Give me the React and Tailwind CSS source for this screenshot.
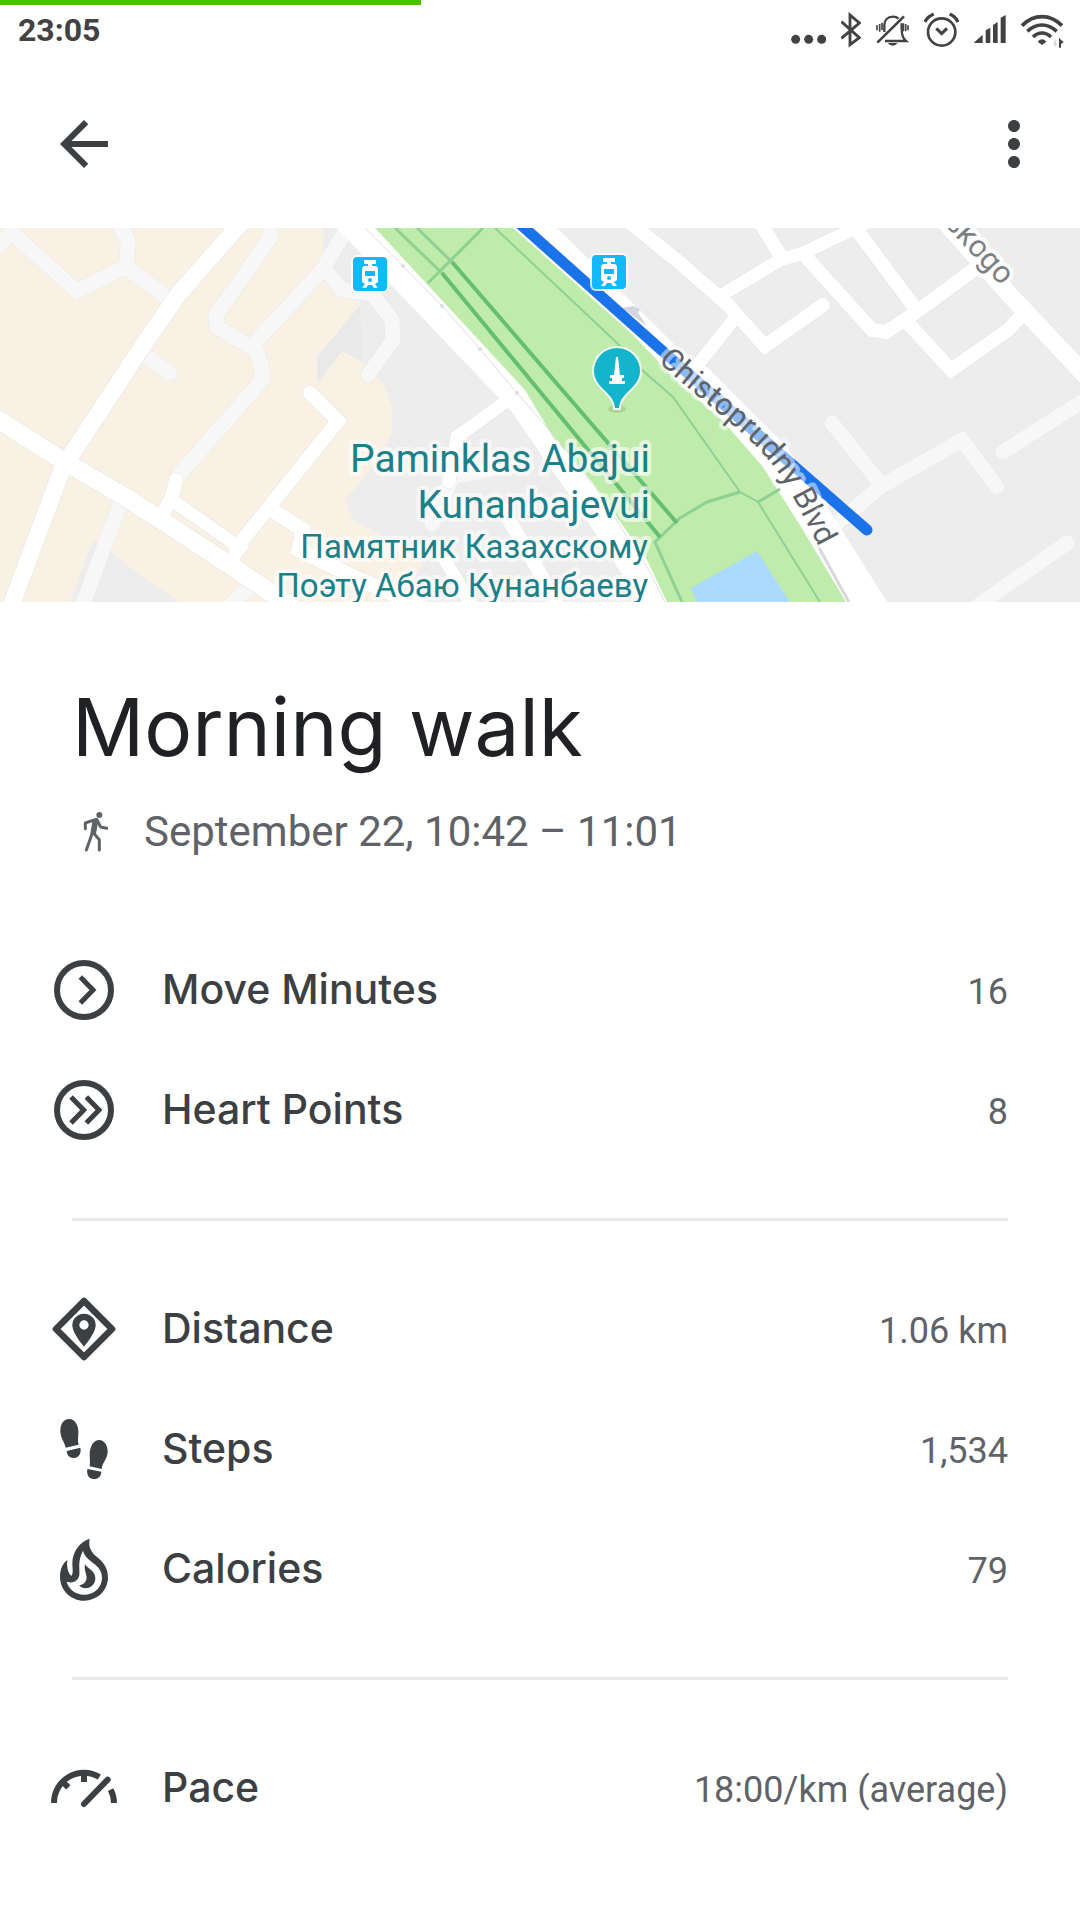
import React from "react";
import { MdArrowBack, MdMoreVert } from "react-icons/md";

const statusIcons = [
  {
    name: "More notifications",
    size: "w-[35px]",
    box: "96 36 105 108",
    art: (
      <g fill="currentColor">
        <circle cx="110" cy="118" r="13.5" />
        <circle cx="149" cy="118" r="13.5" />
        <circle cx="188" cy="118" r="13.5" />
      </g>
    ),
  },
  {
    name: "Bluetooth",
    size: "w-5",
    box: "239 36 60 108",
    art: (
      <path
        d="M240 65 294 113 266 134V45L294 69 240 115"
        fill="none"
        stroke="currentColor"
        strokeWidth="8.500"
      />
    ),
  },
  {
    name: "Notifications silenced",
    size: "w-[33px]",
    box: "345 36 99 108",
    art: (
      <g fill="none" stroke="currentColor" strokeWidth="7">
        <path d="M370 96V76C370 60 380 50 396 50c7 0 12 2 17 6" />
        <path d="M422 70v16c0 18 2 28 13 37h-63" />
        <path d="M349 128 429 49" strokeWidth="8" />
        <path d="M380 129h30q-6 8-15 8t-15-8z" fill="currentColor" stroke="none" />
        <path d="M348 76v15M356 72v23M363 68v22" strokeWidth="5" />
        <path d="M427 70v24M434 72v22M441 76v15" strokeWidth="5" />
      </g>
    ),
  },
  {
    name: "Alarm set",
    size: "w-[35px]",
    box: "490 36 105 108",
    art: (
      <g fill="none" stroke="currentColor" strokeWidth="8">
        <circle cx="543" cy="96" r="41" />
        <path d="M527 85 543 101 559 85" strokeWidth="9" />
        <path d="M492 66Q501 50 519 42M567 42Q585 50 592 66" strokeWidth="10" />
      </g>
    ),
  },
  {
    name: "Signal strength",
    size: "w-8",
    box: "640 36 96 108",
    art: (
      <path
        fill="currentColor"
        d="M641 127 666 104V129H641ZM675 91 689 83V129H675ZM697 75 711 66V129H697ZM720 53 735 45V129H720Z"
      />
    ),
  },
  {
    name: "Wi-Fi",
    size: "w-[43px]",
    box: "783 36 129 108",
    art: (
      <g fill="none" stroke="currentColor" strokeWidth="11">
        <path d="M786 77Q813 50 846 50T906 77" />
        <path d="M802 94Q822 75 846 75T890 94" />
        <path d="M819 111Q831 99 846 99T873 111" />
        <path d="M833 125Q846 111 859 125L846 135Z" fill="currentColor" stroke="none" />
        <path d="M889 114V143L880 130Z" fill="#d8d8d8" stroke="none" />
        <path d="M897 114V143H903V132L911 127Z" fill="currentColor" stroke="none" />
      </g>
    ),
  },
];

const icons = {
  move: (
    <svg viewBox="54 72 216 216" className="size-[72px] shrink-0" fill="none" stroke="currentColor" aria-hidden="true">
      <circle cx="162" cy="180" r="81" strokeWidth="18" />
      <path d="M151 141 189 180 151 219" strokeWidth="15" />
    </svg>
  ),
  heart: (
    <svg viewBox="54 432 216 216" className="size-[72px] shrink-0" fill="none" stroke="currentColor" aria-hidden="true">
      <circle cx="162" cy="540" r="81" strokeWidth="18" />
      <path d="M123 501 161 540 123 579M169 501 207 540 169 579" strokeWidth="15" />
    </svg>
  ),
  distance: (
    <svg viewBox="54 39 216 216" className="size-[72px] shrink-0" fill="currentColor" aria-hidden="true">
      <path
        d="M162 63 246 147 162 231 78 147Z"
        fill="none"
        stroke="currentColor"
        strokeWidth="20"
        strokeLinejoin="round"
      />
      <path
        fillRule="evenodd"
        d="M162 101a35 35 0 0 0-35 35c0 24 35 64 35 64s35-40 35-64a35 35 0 0 0-35-35Zm0 20a14 14 0 1 1 0 28a14 14 0 1 1 0-28Z"
      />
    </svg>
  ),
  steps: (
    <svg viewBox="54 399 216 216" className="size-[72px] shrink-0" fill="currentColor" aria-hidden="true">
      <path d="M117 417C137 417 147 440 145 462 144 475 143 485 146 494L107 503C104 485 91 475 91 452 91 432 101 417 117 417Z" />
      <path d="M110 513 151 503C155 520 146 534 131 534 117 534 111 525 110 513Z" />
      <path d="M207 480C224 480 234 497 233 517 232 537 217 548 215 567L179 559C181 545 179 535 179 522 180 497 192 480 207 480Z" />
      <path d="M172 567 214 575C213 590 205 597 191 597 177 597 169 585 172 567Z" />
    </svg>
  ),
  calories: (
    <svg viewBox="54 759 216 216" className="size-[72px] shrink-0" fill="currentColor" aria-hidden="true">
      <path
        fillRule="evenodd"
        d="M179 776C150 785 127 815 127 850 127 868 131 878 124 888 115 880 109 862 112 840 98 850 90 868 90 890 90 930 122 962 162 962 202 962 234 932 234 892 234 866 222 848 202 832 184 818 174 800 179 776ZM159 812C162 825 172 836 188 848 206 860 216 874 216 893 216 922 192 944 162 944 138 944 116 928 110 905 125 911 145 905 148 885 150 865 142 845 159 812Z"
      />
      <path d="M165 853C172 866 196 872 196 895 196 915 180 925 167 925 158 925 151 921 148 916 165 912 172 900 169 887 167 875 162 868 165 853Z" />
    </svg>
  ),
  pace: (
    <svg viewBox="54 39 216 216" className="size-[72px] shrink-0" fill="none" stroke="currentColor" strokeWidth="18" aria-hidden="true">
      <path d="M72 192A90 90 0 0 1 208 114" />
      <path d="M252 192A90 90 0 0 0 242 152" />
      <path d="M162 102V129M97 127 115 145" />
      <path d="M162 195 233 122" strokeLinecap="round" />
    </svg>
  ),
};

const sections = [
  [
    { icon: "move", label: "Move Minutes", value: "16" },
    { icon: "heart", label: "Heart Points", value: "8" },
  ],
  [
    { icon: "distance", label: "Distance", value: "1.06 km" },
    { icon: "steps", label: "Steps", value: "1,534" },
    { icon: "calories", label: "Calories", value: "79" },
  ],
  [{ icon: "pace", label: "Pace", value: "18:00/km (average)" }],
];

const lanes = [
  "M-6 249 12 233 77 291 125 267 168 297",
  "M127 265 128 240 118 224",
  "M270 220V238L216 315 217 327 256 350 262 367V380L178 476",
  "M346 230 322 270 253 345",
  "M325 270 342 290 372 294 392 320 393 340 368 375",
  "M147 357 170 373",
  "M119 507 82 606",
  "M255 582 230 606",
  "M832 423 880 483",
  "M835 525 880 487 962 440 997 487",
  "M1003 452 1086 399",
  "M1067 543 979 605",
  "M448 478 500 468",
  "M450 482 432 524",
];

const streets = [
  { d: "M240 224 177 296 142 347 71 455 63 467 11 606", w: 17 },
  { d: "M-6 417 67 463 125 497 187 537 255 582 290 606", w: 18 },
  { d: "M176 480 173 494 163 514", w: 14 },
  { d: "M310 393 338 421 236 548", w: 14 },
  { d: "M176 503 240 548 230 562", w: 13 },
  { d: "M272 510 303 530 299 550 350 575 420 606", w: 15 },
  { d: "M505 402 457 437 449 482", w: 13 },
  { d: "M503 510 540 573 558 606", w: 14 },
  { d: "M445 560 472 606", w: 13 },
  { d: "M632 224 680 263 728 305 765 346 823 305", w: 14 },
  { d: "M735 318 700 362", w: 13 },
  { d: "M725 293 780 260 803 253 864 224", w: 13 },
  { d: "M761 224 782 258", w: 14 },
  { d: "M854 226 915 308", w: 14 },
  { d: "M807 258 872 330 886 332 915 313 976 268", w: 14 },
  { d: "M907 322 951 370 1008 330 1023 314", w: 14 },
  { d: "M947 224 1007 292 1086 376", w: 18 },
];

function WalkIcon() {
  return (
    <svg
      viewBox="18 33 138 138"
      className="size-[46px] shrink-0"
      fill="none"
      stroke="currentColor"
      strokeWidth="9"
      strokeLinecap="round"
      strokeLinejoin="round"
      aria-hidden="true"
    >
      <circle cx="100" cy="51" r="9" fill="currentColor" stroke="none" />
      <path d="M58 92V75L90 64" />
      <path d="M93 66 104 87 122 91" />
      <path d="M84 68 93 66 86 104 78 104Z" fill="currentColor" />
      <path d="M80 102 61 156M82 104 100 125V156" />
    </svg>
  );
}

function TramStop({ x, y }) {
  return (
    <g transform={`translate(${x} ${y})`}>
      <rect x="-2" y="-2" width="38" height="38" rx="6" fill="#fff" opacity="0.8" />
      <rect width="34" height="34" rx="4" fill="#12b9fd" />
      <g fill="#fff">
        <path d="M11 3H23V7H19V10H15V7H11Z" />
        <path
          fillRule="evenodd"
          d="M12 9H22Q25 9 25 13V25L22 27 25 31H21L19 28H15L13 31H9L12 27 9 25V13Q9 9 12 9ZM12 14V19H22V14ZM17 21A2 2 0 1 0 17 25 2 2 0 1 0 17 21Z"
        />
      </g>
    </g>
  );
}

function RouteMap() {
  return (
    <svg
      viewBox="0 228 1080 374"
      preserveAspectRatio="xMidYMid slice"
      className="block h-[374px] w-full font-[Roboto,sans-serif]"
      role="img"
      aria-label="Map of the walking route"
    >
      <defs>
        <path id="blvd" d="M658 361C688 391 740 427 766 457S802 518 832 570" />
        <path id="skogo" d="M944 224 1020 307" />
      </defs>
      <rect x="0" y="228" width="1080" height="374" fill="#ededed" />
      <path
        fill="#f9f2e4"
        d="M0 228H325L322 258 345 285 362 305 340 330 317 357 318 383 342 351 360 360 383 383 392 407V433L377 460 360 483 345 500 353 520 390 540 423 563 413 580 390 602H0Z"
      />
      <path fill="#ededed" d="M322 228H345L352 262 356 284 342 282 331 268Z" />
      <path fill="#e9e9e9" d="M360 305 317 357 318 383 342 351 362 362Z" />
      <path fill="#ededed" d="M93 540 112 553 147 580 180 602H70Z" />

      <g fill="none" stroke="#e9e8e5" strokeLinecap="round">
        {lanes.map((d) => (
          <path key={d} d={d} strokeWidth="16" />
        ))}
      </g>
      <g fill="none" stroke="#f7f7f7" strokeLinecap="round">
        {lanes.map((d) => (
          <path key={d} d={d} strokeWidth="15" />
        ))}
      </g>
      <g fill="none" stroke="#e6e5e2" strokeLinecap="round">
        {streets.map((s) => (
          <path key={s.d} d={s.d} strokeWidth={s.w + 1} />
        ))}
      </g>
      <g fill="none" stroke="#fff" strokeLinecap="round">
        {streets.map((s) => (
          <path key={s.d} d={s.d} strokeWidth={s.w} />
        ))}
      </g>

      <path
        fill="#fff"
        d="M337 228 498 397 512 412 540 453 585 517 640 602H887L840 527 787 447 707 367 690 360 557 228Z"
      />
      <path
        fill="#bfecab"
        d="M375 228H513L633 335 680 384 723 421 763 467 803 530 846 602H667L647 560 593 483 553 437 525 390Z"
      />
      <path fill="none" stroke="#dcdfe3" strokeWidth="1" d="M365 228 403 266 442 306 480 349 517 393 555 437 595 487 650 572 665 602" />
      <path fill="none" stroke="#d9d9dc" strokeWidth="3" d="M818 546 850 604" />
      <g fill="#dcdfe3">
        <circle cx="403" cy="266" r="2" />
        <circle cx="442" cy="306" r="2" />
        <circle cx="480" cy="349" r="2" />
        <circle cx="517" cy="393" r="2" />
      </g>
      <path fill="#aadaff" d="M691 588 757 551 790 602H697Z" />
      <g fill="none" stroke="#8fd095" strokeWidth="3">
        <path d="M395 228 442 273M417 228 452 262M483 228 428 283" />
        <path d="M495 228 617 343 642 370 673 397 740 492 758 502 820 602" strokeWidth="2" />
        <path d="M758 502 780 489M740 492 707 502 680 518 655 542 682 602" />
      </g>
      <path fill="none" stroke="#65bf70" strokeWidth="4" d="M442 273 660 537M452 262 677 523" />

      <path fill="#d2d4de" d="M622 308 633 306 640 309 638 313 647 326Z" />
      <path fill="none" stroke="#1a73e8" strokeWidth="11" strokeLinecap="round" d="M519 223 658 347 867 530" />
      <TramStop x={353} y={257} />
      <TramStop x={592} y={255} />

      <ellipse cx="617" cy="409" rx="9" ry="4" fill="#000" opacity="0.1" />
      <path
        d="M617 348A23 23 0 0 0 594 371C594 388 614 392 615 408H619C620 392 640 388 640 371A23 23 0 0 0 617 348Z"
        fill="#12b5cb"
        stroke="#fff"
        strokeOpacity="0.8"
        strokeWidth="4"
        paintOrder="stroke"
      />
      <path fill="#fff" d="M616 357H618L620 375H624V378H622V381H625V384H609V381H612V378H610V375H614Z" />

      <g stroke="#fff" strokeLinejoin="round" paintOrder="stroke">
        <text fill="#5f6368" fontSize="31" strokeWidth="8" strokeOpacity="0.5">
          <textPath href="#blvd">Chistoprudny Blvd</textPath>
        </text>
        <text fill="#7d7f82" fontSize="31" strokeWidth="8" strokeOpacity="0.8">
          <textPath href="#skogo">skogo</textPath>
        </text>
      </g>
      <g
        textAnchor="end"
        fill="#1b808a"
        stroke="#fff"
        strokeOpacity="0.6"
        strokeWidth="8"
        strokeLinejoin="round"
        paintOrder="stroke"
      >
        <text x="650" y="472" fontSize="39">Paminklas Abajui</text>
        <text x="650" y="518" fontSize="39">Kunanbajevui</text>
        <text x="648" y="558" fontSize="33">Памятник Казахскому</text>
        <text x="648" y="597" fontSize="33">Поэту Абаю Кунанбаеву</text>
      </g>
    </svg>
  );
}

export default function App() {
  return (
    <div className="min-h-screen bg-white font-[Roboto,sans-serif] text-[#3c4043]">
      <div className="relative flex h-[60px] items-center justify-between pr-4 pl-[18px] text-[#424242]">
        <div className="absolute top-0 left-0 h-[5px] w-[39%] bg-[#48c100]" />
        <span className="text-[32px] leading-9 font-bold">23:05</span>
        <div className="flex items-center gap-[15px]">
          {statusIcons.map((s) => (
            <svg key={s.name} viewBox={s.box} className={`h-9 ${s.size}`} role="img" aria-label={s.name}>
              {s.art}
            </svg>
          ))}
        </div>
      </div>

      <header className="flex h-[168px] items-center justify-between pr-[30px] pl-12">
        <button type="button" aria-label="Back">
          <MdArrowBack className="size-[72px]" />
        </button>
        <button type="button" aria-label="More options">
          <MdMoreVert className="size-[72px]" />
        </button>
      </header>

      <RouteMap />

      <main>
        <div className="px-[72px] pt-[75px] pb-[71px]">
          <h1 className="font-[Inter,sans-serif] text-[80px] leading-[100px] text-[#202124]">Morning walk</h1>
          <p className="mt-7 flex items-center gap-[26px] text-[42px] leading-[54px] text-[#5f6368]">
            <WalkIcon />
            September 22, 10:42 – 11:01
          </p>
        </div>

        {sections.map((rows, i) => (
          <section key={rows[0].label}>
            {i > 0 && <hr className="mx-[72px] my-12 border-0 border-t-[3px] border-[#e8eaed]" />}
            <ul>
              {rows.map((row) => (
                <li key={row.label} className="flex h-[120px] items-center gap-[42px] pr-[72px] pl-12">
                  {icons[row.icon]}
                  <div className="flex flex-1 items-baseline justify-between">
                    <span className="font-[Inter,sans-serif] text-[41px] leading-[54px] font-medium">{row.label}</span>
                    <span className="text-4xl leading-[54px] text-[#5f6368]">{row.value}</span>
                  </div>
                </li>
              ))}
            </ul>
          </section>
        ))}
      </main>
    </div>
  );
}
